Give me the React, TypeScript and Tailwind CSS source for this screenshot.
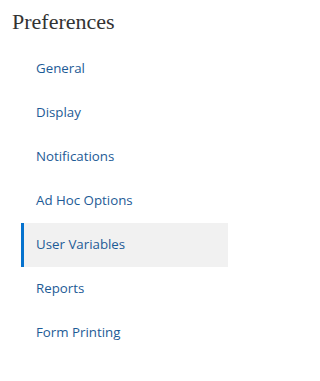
const items = [
  "General",
  "Display",
  "Notifications",
  "Ad Hoc Options",
  "User Variables",
  "Reports",
  "Form Printing",
];

const App = () => {
  const selected = "User Variables";

  return (
    <div className="w-[228px] h-[381px] bg-white">
      <h1
        className="pl-3 pt-[8px] text-[22px] leading-[27px] text-[#333333]"
        style={{ fontFamily: '"Liberation Serif", serif' }}
      >
        Preferences
      </h1>

      <ul className="mt-[12px] ml-[21px]" style={{ fontFamily: '"Open Sans", sans-serif' }}>
        {items.map((item) => (
          <li
            key={item}
            className={
              item === selected
                ? "h-[44px] flex items-center border-l-[3px] border-[#0572ce] bg-[#f1f1f1] pl-3 text-[13.3px] text-[#1d5b96]"
                : "h-[44px] flex items-center border-l-[3px] border-transparent pl-3 text-[13.3px] text-[#1d5b96]"
            }
          >
            {item}
          </li>
        ))}
      </ul>
    </div>
  );
};

export default App;
